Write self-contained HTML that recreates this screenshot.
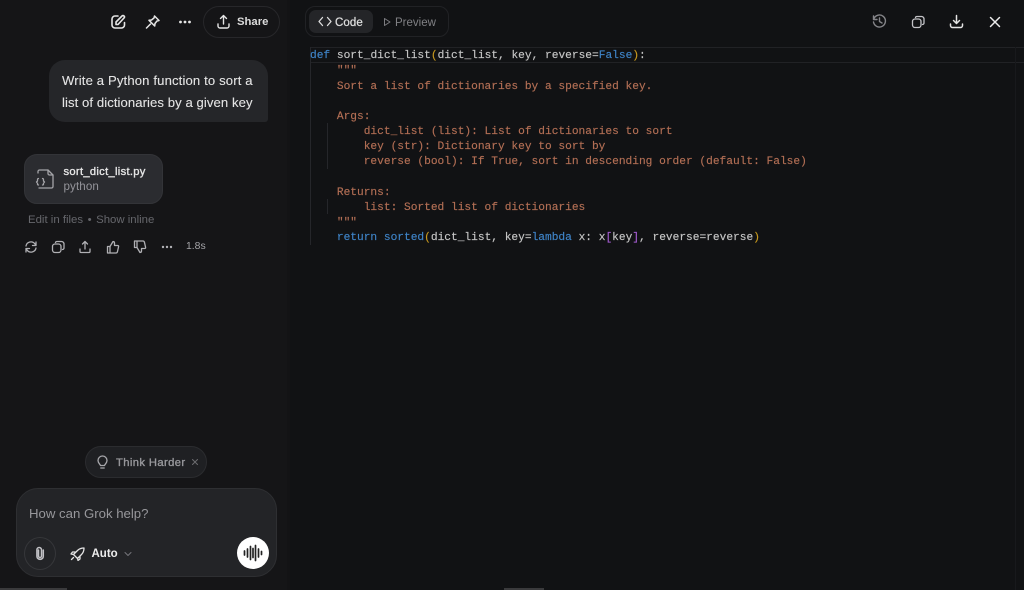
<!DOCTYPE html>
<html><head><meta charset="utf-8">
<style>
*{box-sizing:border-box}
html,body{margin:0;padding:0;width:1024px;height:590px;overflow:hidden;background:#111214}
body{font-family:"Liberation Sans",sans-serif;position:relative}
.abs{position:absolute;white-space:nowrap}
.m{-webkit-text-stroke:.25px currentColor}
svg{position:absolute;fill:none;stroke-linecap:round;stroke-linejoin:round}
#left{position:absolute;left:0;top:0;width:290px;height:590px;background:#151517}
.l{position:absolute;left:310px;font:11.2px/15px "Liberation Mono",monospace;color:#c6c6c6;white-space:pre;-webkit-text-stroke:.15px currentColor}
.b{color:#3f84c8}.s{color:#b36f55}.y{color:#c99a1e}.p{color:#a35bd0}
</style></head><body>
<div id="left"></div>
<div class="abs" style="left:287px;top:0;width:3px;height:590px;background:#131315"></div>

<!-- top left toolbar -->
<svg style="left:111px;top:14px" width="15" height="15" viewBox="0 0 15 15" stroke="#e6e6e6" stroke-width="1.600"><path d="M7 2H4a3 3 0 0 0-3 3v6a3 3 0 0 0 3 3h6.500a3 3 0 0 0 3-3V8.500"/><path d="M5 10.500V8l6-6q1-1 2 0t0 2l-6 6.500z"/></svg>
<svg style="left:145px;top:15px" width="15" height="14" viewBox="0 0 15 14" stroke="#e6e6e6" stroke-width="1.500"><path d="M9.500 1L14 5.500l-2 .5-2 2.500-.3 2.500L4 5.300l2.500-.3L9 3z"/><path d="M5.500 9L1.500 13"/></svg>
<svg style="left:178px;top:17px" width="14" height="10" viewBox="0 0 14 10" stroke="none"><circle cx="2.500" cy="5" r="1.400" fill="#e6e6e6"/><circle cx="7" cy="5" r="1.400" fill="#e6e6e6"/><circle cx="11.500" cy="5" r="1.400" fill="#e6e6e6"/></svg>
<div class="abs" style="left:203px;top:6px;width:77px;height:32px;border:1px solid #27272a;border-radius:16px"></div>
<svg style="left:216px;top:14px" width="15" height="16" viewBox="0 0 15 16" stroke="#e6e6e6" stroke-width="1.400"><path d="M7.500 10V2M4.500 4.500l3-3 3 3M2 10v2a2 2 0 0 0 2 2h7a2 2 0 0 0 2-2v-2"/></svg>
<div class="abs" style="left:237px;top:15px;font-size:11.300px;line-height:14px;font-weight:700;color:#dcdcdc">Share</div>

<!-- user bubble -->
<div class="abs" style="left:49px;top:60px;width:219px;height:62px;background:#252629;border-radius:16px 16px 3px 16px"></div>
<div class="abs m" style="left:62px;top:70px;font-size:13.100px;line-height:22px;letter-spacing:.14px;color:#e4e4e4;-webkit-text-stroke-width:.1px">Write a Python function to sort a<br><span style="letter-spacing:.08px">list of dictionaries by a given key</span></div>

<!-- file card -->
<div class="abs" style="left:24px;top:154px;width:139px;height:50px;background:#2b2c30;border:1px solid #333438;border-radius:13px"></div>
<svg style="left:35px;top:168px" width="20" height="22" viewBox="0 0 20 22" stroke="#a4a4a8" stroke-width="1.300"><path d="M3 5V3.500A1.500 1.500 0 0 1 4.500 2H13l5 5v11.500a1.500 1.500 0 0 1-1.500 1.500H4"/><path d="M13 2v3.500A1.500 1.500 0 0 0 14.500 7H18"/><path d="M3.500 10.500Q2.500 10.500 2.500 12v1L1.500 14l1 1v1q0 1 1 1M7.500 10.500q1 0 1 1.500v1l1 1-1 1v1q0 1-1 1"/></svg>
<div class="abs m" style="left:63.500px;top:165px;font-size:11.200px;line-height:15px;letter-spacing:.3px;color:#e6e6e6;-webkit-text-stroke-width:.35px">sort_dict_list.py</div>
<div class="abs" style="left:63.500px;top:179px;font-size:11.600px;line-height:15px;letter-spacing:.1px;color:#94949a">python</div>
<div class="abs" style="left:28px;top:212.500px;font-size:11.400px;line-height:14px;color:#66676c">Edit in files<span style="margin:0 4.500px">•</span>Show inline</div>

<!-- action row -->
<svg style="left:24px;top:240px" width="14" height="14" viewBox="0 0 14 14" stroke="#b0b0b4" stroke-width="1.300"><path d="M2 6a5 5 0 0 1 9-2l1 1.500M12 2v3.500H8.500M12 8a5 5 0 0 1-9 2L2 8.500M2 12V8.500h3.500"/></svg>
<svg style="left:51px;top:240px" width="14" height="14" viewBox="0 0 14 14" stroke="#b0b0b4" stroke-width="1.300"><rect x="1.500" y="4" width="8.500" height="8.500" rx="2.500"/><path d="M4.500 2.500A1.500 1.500 0 0 1 6 1.500h4.500a2.500 2.500 0 0 1 2.500 2.500V8a1.500 1.500 0 0 1-1.500 1.500"/></svg>
<svg style="left:78px;top:240px" width="14" height="14" viewBox="0 0 14 14" stroke="#b0b0b4" stroke-width="1.300"><path d="M7 9V2M4.500 4L7 1.500 9.500 4M2 9v2.500A1 1 0 0 0 3 12.500h8a1 1 0 0 0 1-1V9"/></svg>
<svg style="left:106px;top:240px" width="14" height="14" viewBox="0 0 14 14" stroke="#b0b0b4" stroke-width="1.300"><path d="M1.500 6.500h2.500v6.500H1.500zM4 6.500L7 1.500q1.500 0 1.500 1.500V5.500h3q1.500 0 1 1.500l-1 4.500q-.3 1.500-1.500 1.500H4"/></svg>
<svg style="left:133px;top:240px" width="14" height="14" viewBox="0 0 14 14" stroke="#b0b0b4" stroke-width="1.300"><path d="M1.500 7.500h2.500V1H1.500zM4 7.500L7 12.500q1.500 0 1.500-1.500V8.500h3q1.500 0 1-1.500l-1-4.500Q11.200 1 10 1H4"/></svg>
<svg style="left:161px;top:242px" width="12" height="10" viewBox="0 0 12 10" stroke="none"><circle cx="2" cy="5" r="1.200" fill="#b0b0b4"/><circle cx="6" cy="5" r="1.200" fill="#b0b0b4"/><circle cx="10" cy="5" r="1.200" fill="#b0b0b4"/></svg>
<div class="abs" style="left:186px;top:240px;font-size:10.400px;line-height:14px;color:#a4a4a8">1.8s</div>

<!-- think harder -->
<div class="abs" style="left:85px;top:446px;width:122px;height:32px;background:#1f2023;border:1px solid #2b2c2f;border-radius:16px"></div>
<svg style="left:96px;top:455px" width="13" height="15" viewBox="0 0 13 15" stroke="#a8a8ac" stroke-width="1.300"><path d="M4.500 10.500C4 9 2 8 2 5.500a4.500 4.500 0 0 1 9 0c0 2.500-2 3.500-2.500 5zM4.800 13h3.400"/></svg>
<div class="abs m" style="left:116px;top:455.500px;font-size:11.200px;line-height:14px;letter-spacing:.4px;color:#98989c;-webkit-text-stroke-width:.35px">Think Harder</div>
<svg style="left:192px;top:459px" width="6" height="6" viewBox="0 0 6 6" stroke="#6c6c70" stroke-width="1"><path d="M.5.500l5 5M5.500.500l-5 5"/></svg>

<!-- input -->
<div class="abs" style="left:16px;top:488px;width:261px;height:89px;background:#232427;border:1px solid #2e2f32;border-radius:22px"></div>
<div class="abs" style="left:29px;top:505.500px;font-size:13.200px;line-height:16px;color:#97979b">How can Grok help?</div>
<div class="abs" style="left:24px;top:537px;width:32px;height:33px;border:1px solid #36373a;border-radius:50%"></div>
<svg style="left:34px;top:546px" width="12" height="15" viewBox="0 0 12 15" stroke="#c2c2c6" stroke-width="1.500"><path d="M4.500 4v6a1.500 1.500 0 0 0 3 0V3.800a2.300 2.300 0 0 0-4.600 0v6.400a3.200 3.200 0 0 0 6.400 0V4"/></svg>
<svg style="left:70px;top:547px" width="15" height="14" viewBox="0 0 15 14" stroke="#e4e4e4" stroke-width="1.300"><path d="M5 9L3.500 7.500 7.500 3.500Q10 1 14 1q0 4-2.500 6.500L7.500 11.500zM5 5H2.500L1 7l2.500.5M10 9.500v2.500L8 13.500l-.5-2.500M3.500 10.500L1.500 12.500"/></svg>
<div class="abs" style="left:91.500px;top:546.500px;font-size:11.500px;line-height:14px;font-weight:700;color:#ededed">Auto</div>
<svg style="left:124px;top:551px" width="8" height="6" viewBox="0 0 8 6" stroke="#75757a" stroke-width="1"><path d="M1 1.500l3 3 3-3"/></svg>
<div class="abs" style="left:237px;top:537px;width:32px;height:32px;background:#fff;border-radius:50%"></div>
<svg style="left:243px;top:544px" width="20" height="18" viewBox="0 0 20 18" stroke="#222" stroke-width="1.700"><path d="M1.500 7v4M4.500 5v8M7.500 2.500v13M10 4.500v9M12.500 1.500v15M15.500 5v8M18.500 7.500v3"/></svg>
<div class="abs" style="left:0;top:588px;width:67px;height:2px;background:#3a3a3c"></div>

<!-- code/preview tabs -->
<div class="abs" style="left:305px;top:6px;width:144px;height:31px;border:1px solid #212225;border-radius:10px"></div>
<div class="abs" style="left:309px;top:10px;width:64px;height:23px;background:#242528;border-radius:7px"></div>
<svg style="left:318px;top:16px" width="14" height="11" viewBox="0 0 14 11" stroke="#dedede" stroke-width="1.300"><path d="M4.500 1.500L1 5.500l3.500 4M9.500 1.500l3.500 4-3.500 4"/></svg>
<div class="abs m" style="left:335px;top:15.500px;font-size:11.500px;line-height:14px;letter-spacing:.1px;color:#dedede">Code</div>
<svg style="left:383px;top:17px" width="9" height="11" viewBox="0 0 9 11" stroke="#7c7c80" stroke-width="1"><path d="M1.500 1.500v7l5.500-3.500z"/></svg>
<div class="abs" style="left:395px;top:15.500px;font-size:11.500px;line-height:14px;color:#808084">Preview</div>

<!-- right toolbar -->
<svg style="left:872px;top:14px" width="15" height="15" viewBox="0 0 15 15" stroke="#858589" stroke-width="1.400"><path d="M1.500 2v3.500H5M1.700 5.200A6 6 0 1 1 1.500 8M7.500 4v3.500l2.500 1.500"/></svg>
<svg style="left:911px;top:15px" width="14" height="14" viewBox="0 0 14 14" stroke="#c4c4c8" stroke-width="1.300"><rect x="1.500" y="4" width="8.500" height="8.500" rx="2.500"/><path d="M4.500 2.500A1.500 1.500 0 0 1 6 1.500h4.500a2.500 2.500 0 0 1 2.500 2.500V8a1.500 1.500 0 0 1-1.500 1.500"/></svg>
<svg style="left:949px;top:14px" width="15" height="16" viewBox="0 0 15 16" stroke="#e4e4e4" stroke-width="1.500"><path d="M7.500 1.500V9M4.500 6.500l3 3 3-3M1.500 10v1.500a2 2 0 0 0 2 2h8a2 2 0 0 0 2-2V10"/></svg>
<svg style="left:989px;top:16px" width="12" height="12" viewBox="0 0 12 12" stroke="#ececec" stroke-width="1.500"><path d="M1.500 1.500l9 9M10.500 1.500l-9 9"/></svg>

<!-- code guides -->
<div class="abs" style="left:310px;top:47px;width:714px;height:1px;background:#212225"></div>
<div class="abs" style="left:310px;top:62px;width:714px;height:1px;background:#212225"></div>
<div class="abs" style="left:1015px;top:47px;width:1px;height:543px;background:#18191c"></div>
<div class="abs" style="left:310px;top:47px;width:1px;height:198px;background:#25262a"></div>
<div class="abs" style="left:327px;top:123px;width:1px;height:46px;background:#25262a"></div>
<div class="abs" style="left:327px;top:199px;width:1px;height:15px;background:#25262a"></div>
<div class="abs" style="left:504px;top:588px;width:40px;height:2px;background:#3a3a3c"></div>

<!-- code -->
<div class="l" style="top:49px"><span class="b">def</span> sort_dict_list<span class="y">(</span>dict_list, key, reverse=<span class="b">False</span><span class="y">)</span>:</div>
<div class="l s" style="top:64px">    """</div>
<div class="l s" style="top:80px">    Sort a list of dictionaries by a specified key.</div>
<div class="l s" style="top:110px">    Args:</div>
<div class="l s" style="top:125px">        dict_list (list): List of dictionaries to sort</div>
<div class="l s" style="top:140px">        key (str): Dictionary key to sort by</div>
<div class="l s" style="top:155px">        reverse (bool): If True, sort in descending order (default: False)</div>
<div class="l s" style="top:186px">    Returns:</div>
<div class="l s" style="top:201px">        list: Sorted list of dictionaries</div>
<div class="l s" style="top:216px">    """</div>
<div class="l" style="top:231px">    <span class="b">return sorted</span><span class="y">(</span>dict_list, key=<span class="b">lambda</span> x: x<span class="p">[</span>key<span class="p">]</span>, reverse=reverse<span class="y">)</span></div>
</body></html>
